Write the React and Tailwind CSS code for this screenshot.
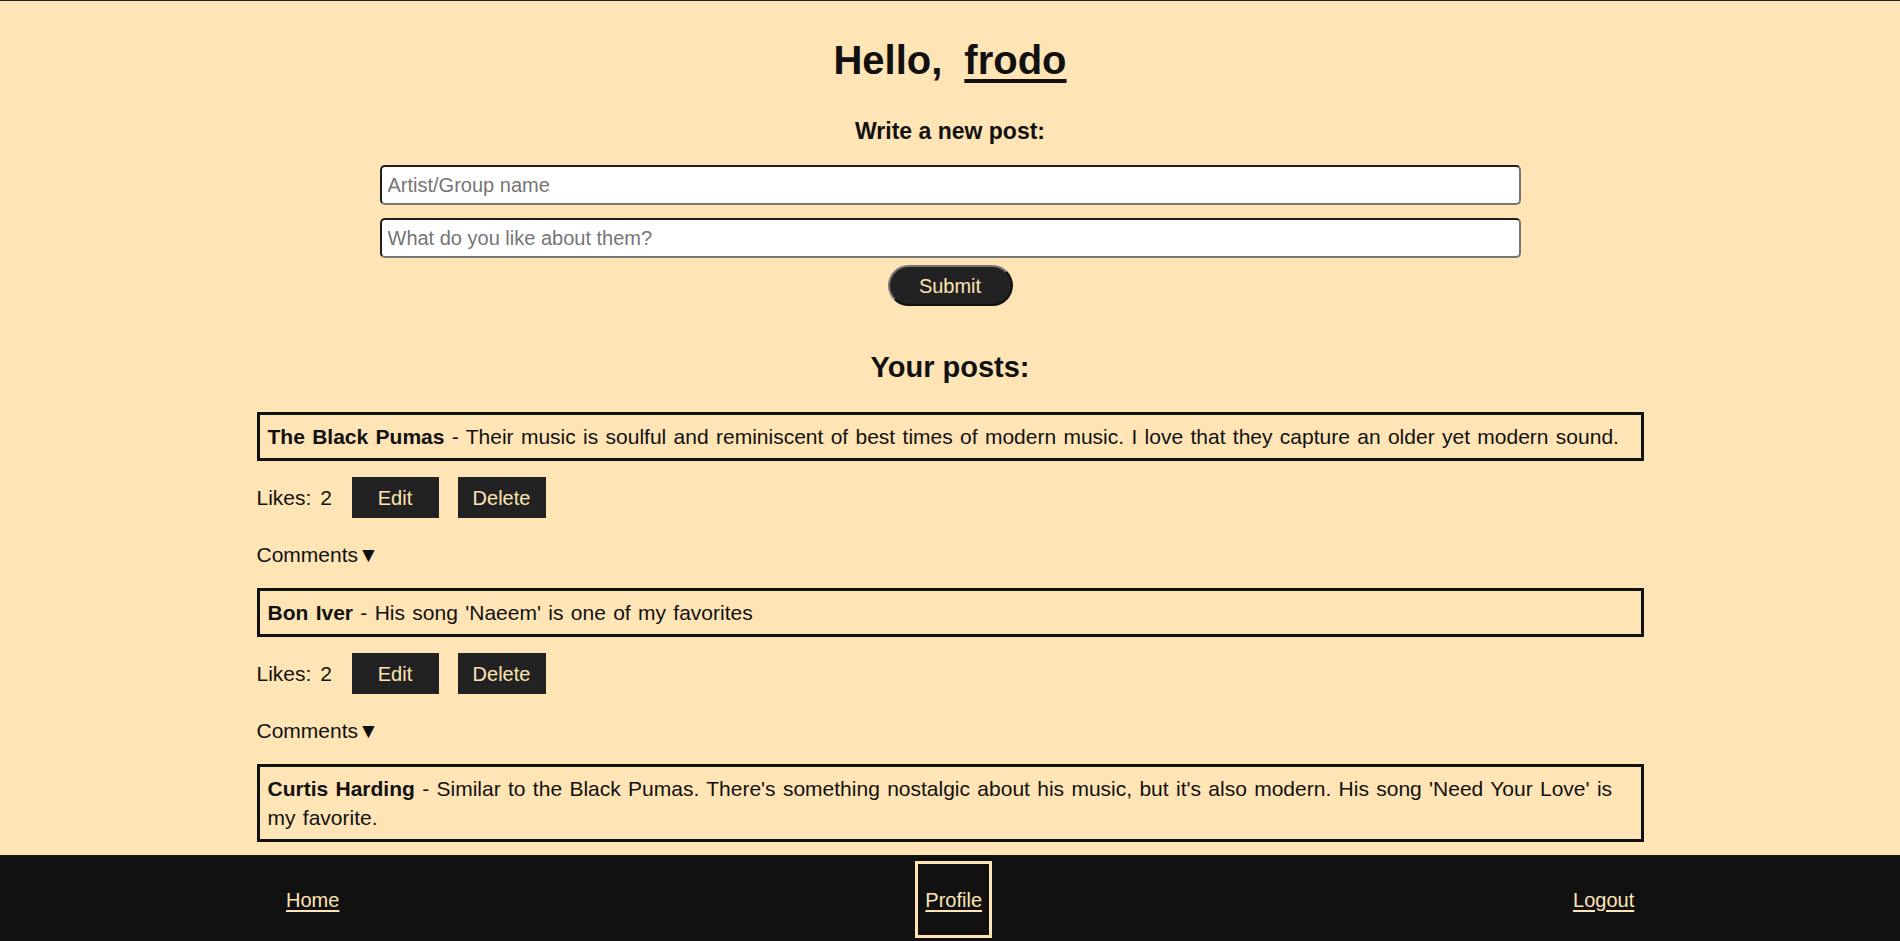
import { useState } from "react";

const POSTS = [
  {
    id: 1,
    artist: "The Black Pumas",
    text: "Their music is soulful and reminiscent of best times of modern music. I love that they capture an older yet modern sound.",
    likes: 2,
  },
  {
    id: 2,
    artist: "Bon Iver",
    text: "His song 'Naeem' is one of my favorites",
    likes: 2,
  },
  {
    id: 3,
    artist: "Curtis Harding",
    text: "Similar to the Black Pumas. There's something nostalgic about his music, but it's also modern. His song 'Need Your Love' is my favorite.",
    likes: 0,
  },
];

const BODY_FONT = "font-['Liberation_Sans',Arial,sans-serif]";

function Post({ post }) {
  return (
    <div className="mb-[19px]">
      <div className="border-[3px] border-[#111] px-[8px] py-[7px] text-[21px] leading-[29px] text-[#111] [word-spacing:1.5px]">
        <span className="font-bold">{post.artist}</span> - {post.text}
      </div>

      <div className="mt-[16px] flex h-[41px] items-center">
        <span className="w-[76px] text-[21px] leading-[29px] text-[#111] [word-spacing:3px]">
          Likes: {post.likes}
        </span>
        <button
          type="button"
          className="ml-[19px] h-[41px] w-[87px] bg-[#222] text-[20px] text-[#ffe4b5]"
        >
          Edit
        </button>
        <button
          type="button"
          className="ml-[19px] h-[41px] w-[88px] bg-[#222] text-[20px] text-[#ffe4b5]"
        >
          Delete
        </button>
      </div>

      <div className="mt-[22px] text-[21px] leading-[29px] text-[#111]">
        Comments▼
      </div>
    </div>
  );
}

function NavLink({ label, active, className }) {
  return (
    <a
      href="#"
      className={
        "flex h-[77px] items-center border-[3px] px-[7px] text-[20px] text-[#ffe4b5] underline underline-offset-[3px] " +
        (active ? "border-[#ffe4b5] " : "border-transparent ") +
        className
      }
    >
      {label}
    </a>
  );
}

export default function App() {
  const [artist, setArtist] = useState("");
  const [note, setNote] = useState("");

  return (
    <div className={"flex h-[941px] flex-col overflow-hidden bg-[#ffe4b5] " + BODY_FONT}>
      <main className="h-[855px] shrink-0 overflow-hidden border-t border-[#222]">
        <h1 className="mt-[39px] text-center text-[40px] font-bold leading-none text-[#111]">
          Hello,
          <a href="#" className="ml-[22px] underline decoration-[4px] underline-offset-[5px]">
            frodo
          </a>
        </h1>

        <h3 className="mt-[40px] text-center text-[23px] font-bold leading-none text-[#111]">
          Write a new post:
        </h3>

        <form
          onSubmit={(e) => e.preventDefault()}
          className="mx-auto mt-[22px] flex w-[1141px] flex-col items-center"
        >
          <input
            value={artist}
            onChange={(e) => setArtist(e.target.value)}
            placeholder="Artist/Group name"
            className="h-[40px] w-full rounded-[5px] border-2 border-t-[#1f1f1f] border-l-[#1f1f1f] border-r-[#767676] border-b-[#767676] bg-white px-[6px] text-[20px] text-[#111] outline-none placeholder:text-[#757575]"
          />
          <input
            value={note}
            onChange={(e) => setNote(e.target.value)}
            placeholder="What do you like about them?"
            className="mt-[13px] h-[40px] w-full rounded-[5px] border-2 border-t-[#1f1f1f] border-l-[#1f1f1f] border-r-[#767676] border-b-[#767676] bg-white px-[6px] text-[20px] text-[#111] outline-none placeholder:text-[#757575]"
          />
          <button
            type="submit"
            className="mt-[7px] h-[41px] w-[125px] rounded-full border-2 border-t-[#767676] border-l-[#767676] border-r-[#111] border-b-[#111] bg-[#222] text-[20px] text-[#ffe4b5]"
          >
            Submit
          </button>
        </form>

        <h2 className="mt-[47px] text-center text-[29px] font-bold leading-none text-[#111]">
          Your posts:
        </h2>

        <div className="mx-auto mt-[30px] w-[1387px]">
          {POSTS.map((post) => (
            <Post key={post.id} post={post} />
          ))}
        </div>
      </main>

      <footer className="flex h-[86px] shrink-0 items-center bg-[#111] pt-[3px]">
        <NavLink label="Home" className="ml-[276px]" />
        <NavLink label="Profile" active className="ml-[566px]" />
        <NavLink label="Logout" className="ml-[571px]" />
      </footer>
    </div>
  );
}
